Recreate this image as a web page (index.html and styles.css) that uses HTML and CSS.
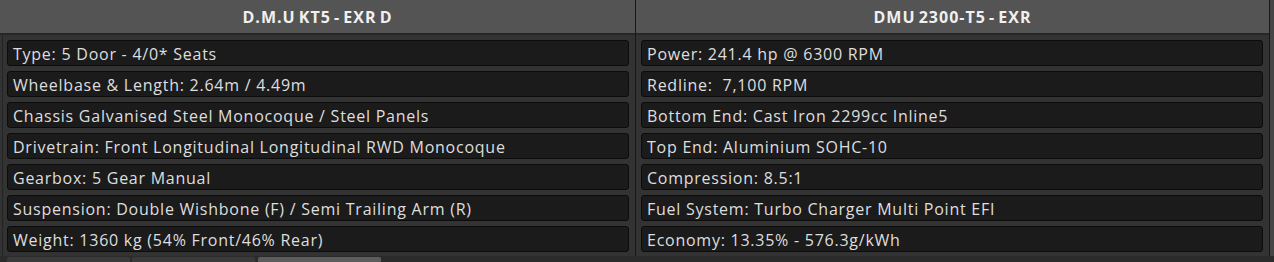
FILE: index.html
```html
<!DOCTYPE html>
<html>
<head>
<meta charset="utf-8">
<link rel="stylesheet" href="styles.css">
</head>
<body>
<div class="frame">
  <section class="col col-a">
    <header class="col-head">D.M.U KT5 - EXR D</header>
    <ul class="rows">
      <li class="row">Type: 5 Door - 4/0* Seats</li>
      <li class="row">Wheelbase &amp; Length: 2.64m / 4.49m</li>
      <li class="row">Chassis Galvanised Steel Monocoque / Steel Panels</li>
      <li class="row">Drivetrain: Front Longitudinal Longitudinal RWD Monocoque</li>
      <li class="row">Gearbox: 5 Gear Manual</li>
      <li class="row">Suspension: Double Wishbone (F) / Semi Trailing Arm (R)</li>
      <li class="row">Weight: 1360 kg (54% Front/46% Rear)</li>
    </ul>
  </section>
  <section class="col col-b">
    <header class="col-head">DMU 2300-T5 - EXR</header>
    <ul class="rows">
      <li class="row">Power: 241.4 hp @ 6300 RPM</li>
      <li class="row">Redline:&nbsp; 7,100 RPM</li>
      <li class="row">Bottom End: Cast Iron 2299cc Inline5</li>
      <li class="row">Top End: Aluminium SOHC-10</li>
      <li class="row">Compression: 8.5:1</li>
      <li class="row">Fuel System: Turbo Charger Multi Point EFI</li>
      <li class="row">Economy: 13.35% - 576.3g/kWh</li>
    </ul>
  </section>
  <div class="edge"></div>
</div>
<div class="tabs">
  <span class="tab"></span>
  <span class="tab"></span>
  <span class="tab tab-active"></span>
</div>
</body>
</html>
```
FILE: styles.css
```css
html, body {
  margin: 0;
  padding: 0;
}
body {
  width: 1274px;
  height: 262px;
  overflow: hidden;
  background: #2b2b2b;
  font-family: "Open Sans", "DejaVu Sans", sans-serif;
  color: #dedede;
}
.frame {
  display: flex;
  height: 256px;
}
.col {
  display: flex;
  flex-direction: column;
  background: #333333;
  border-right: 1px solid #171717;
  box-sizing: border-box;
}
.col-a { width: 636px; }
.col-b { width: 634px; }
.edge {
  width: 4px;
  background: #454545;
}
.col-head {
  height: 33px;
  background: #545454;
  border-bottom: 2px solid #262626;
  display: flex;
  align-items: center;
  justify-content: center;
  font-weight: 700;
  font-size: 16px;
  color: #f0f0f0;
  letter-spacing: 1px;
  word-spacing: -2px;
}
.rows {
  list-style: none;
  margin: 0;
  padding: 5px 6px 4px 5px;
  display: flex;
  flex-direction: column;
  gap: 5px;
  flex: 1;
}
.col-a .rows {
  margin-left: 2px;
  border-left: 1px solid #242424;
  padding-left: 4px;
}
.row {
  height: 26px;
  box-sizing: border-box;
  background: #1c1b1c;
  border: 1px solid #0c0c0c;
  border-radius: 3px;
  padding: 1px 5px 0;
  display: flex;
  align-items: center;
  font-size: 16px;
  letter-spacing: 0.75px;
  white-space: nowrap;
}
.tabs {
  display: flex;
  gap: 2px;
  height: 6px;
  padding: 1px 0 0 7px;
  background: #2b2b2b;
}
.tab {
  width: 123px;
  background: #3a3a3a;
  border-radius: 2px 2px 0 0;
}
.tab-active {
  margin-left: 1px;
  background: #5c5c5c;
}
```
